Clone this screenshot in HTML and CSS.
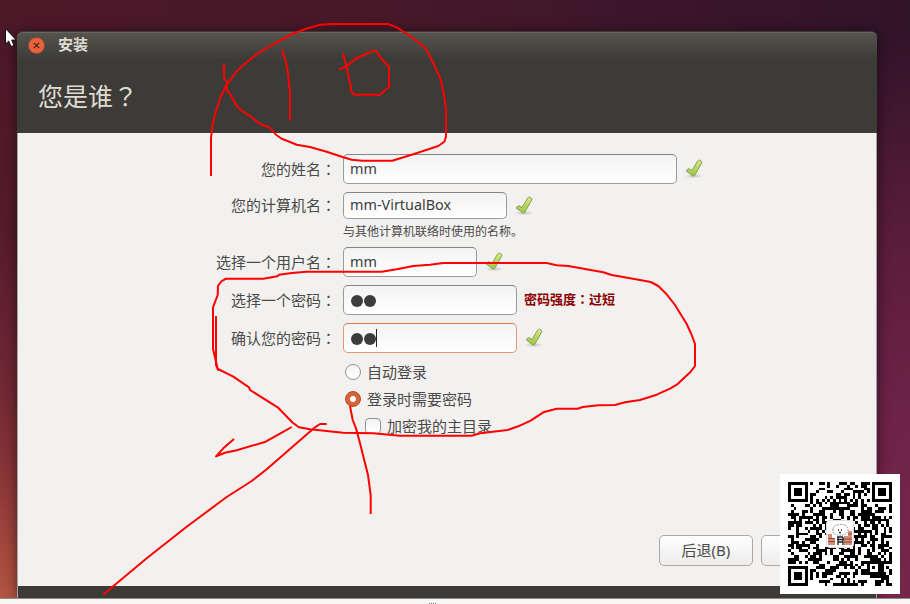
FILE: index.html
```html
<!DOCTYPE html>
<html lang="zh-CN">
<head>
<meta charset="utf-8">
<title>安装</title>
<link rel="stylesheet" href="styles.css">
</head>
<body>
<svg class="defs" width="0" height="0">
  <defs>
    <linearGradient id="leaf" x1="0" y1="0" x2="0" y2="1">
      <stop offset="0" stop-color="#dcea7c"/><stop offset="1" stop-color="#9fc53c"/>
    </linearGradient>
    <radialGradient id="shade"><stop offset="0" stop-color="#000" stop-opacity=".2"/><stop offset="1" stop-color="#000" stop-opacity="0"/></radialGradient>
    <symbol id="tick" viewBox="0 0 20 20">
      <ellipse cx="10" cy="17" rx="9.5" ry="2.4" fill="url(#shade)"/>
      <path d="M2 11.800 4.700 9.500 8 11.600 13.700 1.900Q14.500 .9 15.700 1.300L17.400 2.200Q18.200 2.900 17.700 3.900L10.600 16.600Q9.900 17.400 9 16.900Z" fill="url(#leaf)" stroke="#7ba35c" stroke-width="1" stroke-linejoin="round"/>
    </symbol>
  </defs>
</svg>
<div class="desktop">
  <main class="window">
    <header class="header">
      <div class="titlebar">
        <svg class="close" viewBox="0 0 16 16"><circle cx="8" cy="8" r="7.6"/><path d="M5.5 5.500l5 5M10.500 5.500l-5 5"/></svg>
        <span class="title">安装</span>
      </div>
      <h1>您是谁<span class="mid" lang="zh-TW">？</span></h1>
    </header>
    <form class="form">
      <div class="row"><label>您的姓名<span class="mid" lang="zh-TW">：</span></label><div class="field name">mm</div><svg class="tick"><use href="#tick"/></svg></div>
      <div class="row host-row"><label>您的计算机名<span class="mid" lang="zh-TW">：</span></label><div class="field host">mm-VirtualBox</div><svg class="tick"><use href="#tick"/></svg></div>
      <p class="hint">与其他计算机联络时使用的名称。</p>
      <div class="row"><label>选择一个用户名<span class="mid" lang="zh-TW">：</span></label><div class="field user">mm</div><svg class="tick"><use href="#tick"/></svg></div>
      <div class="row"><label>选择一个密码<span class="mid" lang="zh-TW">：</span></label><div class="field pass"><i class="dot"></i><i class="dot"></i></div><strong class="strength">密码强度<span class="mid" lang="zh-TW">：</span>过短</strong></div>
      <div class="row"><label>确认您的密码<span class="mid" lang="zh-TW">：</span></label><div class="field pass focused"><i class="dot"></i><i class="dot"></i><i class="caret"></i></div><svg class="tick"><use href="#tick"/></svg></div>
      <div class="options">
        <div class="option"><i class="radio"></i>自动登录</div>
        <div class="option"><i class="radio on"></i>登录时需要密码</div>
        <div class="option nested"><i class="check"></i>加密我的主目录</div>
      </div>
      <div class="actions"><div class="button">后退(B)</div><div class="button next"></div></div>
    </form>
    <footer class="base"></footer>
  </main>
</div>
<div class="grip"><i></i><i></i><i></i><i></i></div>

<svg class="pointer" viewBox="0 0 14 22"><path d="M1.500 1.500v15.500l3.200-3 2.300 5.600 3-1.200-2.300-5.400h4.500Z"/></svg>

<svg class="ink" viewBox="0 0 910 604">
  <path d="M211 176V138L213 122 217 108 221 96 226 86 236 72 246 62.7 259 52.5 275 43.3 292 34 306 28.7 320 24.7 332 24H388.3L397.3 27.7 410 36 425.3 47.7 434 64.3 440.7 79.3 444.3 96.7 446 110V136.7L444.3 141.7 438.3 146 413.3 154.3 392.3 160.7H362.3L351.7 159.7 341.7 156.7 326.7 151.7 310 147 296.7 144.7 290 142 281.7 138.7 276 134.7 269.3 127.3 260 124 250 116 241.7 110.7 236.7 105.7 231.7 96.7 227.3 90.7 226.7 81.7 224 78V63.3"/>
  <path d="M282.3 50 283.3 54.3 285.7 61 288 73.3 289 85 290 91.7V120.7"/>
  <path d="M343 53.3 345.7 63.3 347.7 71.7 349 80 351 86V91L354 94.7H380L389 86.7V66.7L382.3 60 376 50.7H373.3L355 59 348.3 65 339 69.7"/>
  <path d="M216 316V365L218 370 213 349V307.3L217.7 295 218 286 221 281.7 226 278.7H263.3L277.3 276.3 279 274.7 291.7 273 306.7 271.7H381.7L396.7 269.3 413.3 266 430 264.7 443.3 263H546.7L556.7 265.3 568.3 266 603.3 272.3 611.7 275 640 280 650.7 282 658.3 286 666.7 294.3 675 305 686.7 324 691.7 335 695 344V366L690.7 371.7 677.3 384.3 670 388.7 656.7 394.7 640 400 625 402.3 615 405 598.3 405.3 582.7 407 577.7 408.7H556.7L543.3 412.3 530.7 420.7 518.3 426.3 507.7 430 480 433.3 471.7 435.7H400L373.3 433.3 343 432.7 310 429.3 299 427.3 292.7 422.7 277.7 407.3 250 390 249 387.3 233.3 376.7 218 369"/>
  <path d="M291.7 427 280 433.7 265.7 441.7 236.7 450.3 225 452.7 216 456.3 223.3 448.3 234 439"/>
  <path d="M326.7 424H320L315 427.3 298.3 441.7 266.7 469.3 251.7 481 226.7 497 186.7 526.7 146.7 558.3 103 594.7"/>
  <path d="M350 406 352.7 420 356 428.3 360 443.3 368 475 370.7 495V514"/>
</svg>

<aside class="qr">
  <svg id="code" viewBox="0 0 37 37" shape-rendering="crispEdges"></svg>
  <svg class="badge" viewBox="0 0 28 28">
    <rect x=".5" y=".5" width="27" height="27" rx="3" fill="#fff" stroke="#ddd"/>
    <path d="M2 18h7v7H2zM2 14h4v4H2zM18 16h8v9h-8zM22 11h4v5h-4z" fill="#d98d74"/>
    <path d="M2 18.500h7M2 21.500h7M18 19h8M18 22h8M22 14h4" stroke="#6e3b2e" stroke-width=".8"/>
    <path d="M7 10q0-5 7-5.500 8 0 8 5 0 4-5 5.500h-6q-4-1-4-5" fill="#fff" stroke="#777" stroke-width=".9" stroke-dasharray="1.500 1"/>
    <path d="M12 10h1M15 10h1M13 12.500h2M11 17h6M11 19.500h7M12 22h5M12 17v8M17 17v8" fill="none" stroke="#272020" stroke-width="1.300"/>
  </svg>
</aside>
<script src="code.js"></script>
</body>
</html>
```
FILE: styles.css
```css
* { box-sizing: border-box; }
body { margin: 0; width: 910px; height: 604px; overflow: hidden; position: relative; background: #f7f6f5; font-family: "Noto Sans", "Noto Sans CJK SC", sans-serif; font-size: 15px; color: #4a4a48; }
.defs { position: absolute; }
.mid { font-family: "Noto Sans CJK TC", sans-serif; }
.desktop { height: 599px; padding: 31px 33px 0 17px; overflow: hidden; border-bottom: 1px solid #8d8b89;
  background:
    linear-gradient(#31132a, #591c3c 200px, #70234a 400px, #76264a) right 0 top 31px / 50px 100% no-repeat,
    linear-gradient(#4c1829, #561b2c 200px, #742a35 370px, #8c3738 450px, #b55541 567px) 0 31px / 30px 100% no-repeat,
    linear-gradient(90deg, #4d1929, #451829 50%, #31132a); }
.window { height: 567px; display: flex; flex-direction: column; border-radius: 6px 6px 0 0; box-shadow: 0 2px 14px #0008; }
.header { height: 102px; background: linear-gradient(#55544e, #3c3b37 28px); border-top: 1px solid #3a3935; box-shadow: inset 0 1px #686760; color: #dfdbd2; border-radius: 6px 6px 0 0; }
.titlebar { height: 27px; display: flex; align-items: center; padding-left: 11px; gap: 13px; }
.close { width: 17px; height: 17px; }
.close circle { fill: #e9633a; stroke: #91442c; stroke-width: .7; }
.close path { stroke: #4a2418; stroke-width: 1.2; fill: none; }
.title { font-size: 15px; font-weight: 700; line-height: 25px; padding-bottom: 2px; }
h1 { margin: 18px 0 0 21px; font-size: 25px; line-height: 36px; font-weight: 400; }
.form { flex: 1; padding-top: 21px; display: flex; flex-direction: column; background: #f2f1f0; border: 1px solid #aaa29f; border-width: 0 1px; }
.row { height: 30px; margin-bottom: 8px; display: flex; align-items: center; }
.host-row { height: 27px; margin-bottom: 4px; }
.row label { width: 318px; margin-right: 7px; text-align: right; white-space: nowrap; line-height: 24px; }
.host-row label { padding-bottom: 1px; }
.field { height: 100%; border: 1px solid #999b9a; border-top-color: #858787; border-radius: 5px; background: linear-gradient(#f3f3f3, #fff); padding: 0 6px 1px; display: flex; align-items: center; color: #3c3c3c; font-size: 14.4px; line-height: 20px; }
.name { width: 334px; }
.host { width: 164px; }
.user { width: 134px; }
.pass { width: 174px; padding: 1px 7px 0; }
.focused { border-color: #e59578; border-top-color: #dd7c59; }
.dot { width: 12px; height: 12px; margin-right: 1px; border-radius: 50%; background: #3c3c3c; }
.caret { width: 1px; height: 18px; margin: -2px 0 0 -1px; background: #222; }
.tick { width: 20px; height: 20px; margin-left: 7px; }
.strength { margin-left: 7px; font-size: 13px; line-height: 20px; color: #8b0000; padding-bottom: 2px; }
.hint { margin: 0 0 6px 325px; font-size: 12px; line-height: 18px; }
.options { margin-top: -3px; padding-left: 327px; display: flex; flex-direction: column; }
.option { height: 27px; display: flex; align-items: center; gap: 6px; line-height: 24px; }
.nested { padding-left: 20px; }
.radio, .check { width: 16px; height: 16px; border: 1px solid #949493; border-radius: 50%; background: linear-gradient(#f3f3f3, #fff); }
.on { border-color: #a64d2c; background: radial-gradient(circle, #fff 2.5px, #d76438 3.5px); }
.check { border-radius: 4px; }
.actions { margin: auto 0 20px 641px; display: flex; gap: 8px; }
.button { width: 94px; height: 31px; border: 1px solid #aaa9a7; border-radius: 5px; background: linear-gradient(#fdfdfd, #eeedec); text-align: center; line-height: 29px; }
.base { height: 12px; background: #3c3b37; border: 1px solid #aaa29f; border-width: 0 1px; }
.grip { height: 5px; display: flex; gap: 1px; justify-content: center; padding: 4px 45px 0 0; }
.grip i { width: 1px; height: 1px; background: #777; }
.pointer { position: absolute; left: 4px; top: 27px; width: 14px; height: 22px; fill: #fff; stroke: #111; stroke-width: 1; }
.ink { position: absolute; inset: 0; width: 910px; height: 604px; fill: none; stroke: #f00; stroke-width: 2; stroke-linejoin: round; }
.qr { position: absolute; left: 780px; top: 474px; width: 120px; height: 120px; padding: 8px; background: #fff; }
.qr > #code { display: block; width: 104px; height: 104px; }
.badge { position: absolute; left: 46px; top: 46px; width: 28px; height: 28px; }
```
FILE: code.js
```js
const size = 37;
const svg = document.getElementById("code");
let seed = 7919;
let d = "";
const random = () => (seed = (seed * 16807) % 2147483647) / 2147483647;
const ring = (x, y, cx, cy) => Math.max(Math.abs(x - cx), Math.abs(y - cy));
for (let y = 0; y < size; y++) {
  for (let x = 0; x < size; x++) {
    let dark = random() < 0.5;
    if (x === 6 || y === 6) dark = (x + y) % 2 === 0;
    if (ring(x, y, 30, 30) <= 2) dark = ring(x, y, 30, 30) !== 1;
    for (const [cx, cy] of [[3, 3], [33, 3], [3, 33]]) {
      const r = ring(x, y, cx, cy);
      if (r <= 4) dark = r !== 2 && r !== 4;
    }
    if (dark) d += `M${x} ${y}h1v1h-1z`;
  }
}
const path = document.createElementNS("http://www.w3.org/2000/svg", "path");
path.setAttribute("d", d);
svg.append(path);
```
